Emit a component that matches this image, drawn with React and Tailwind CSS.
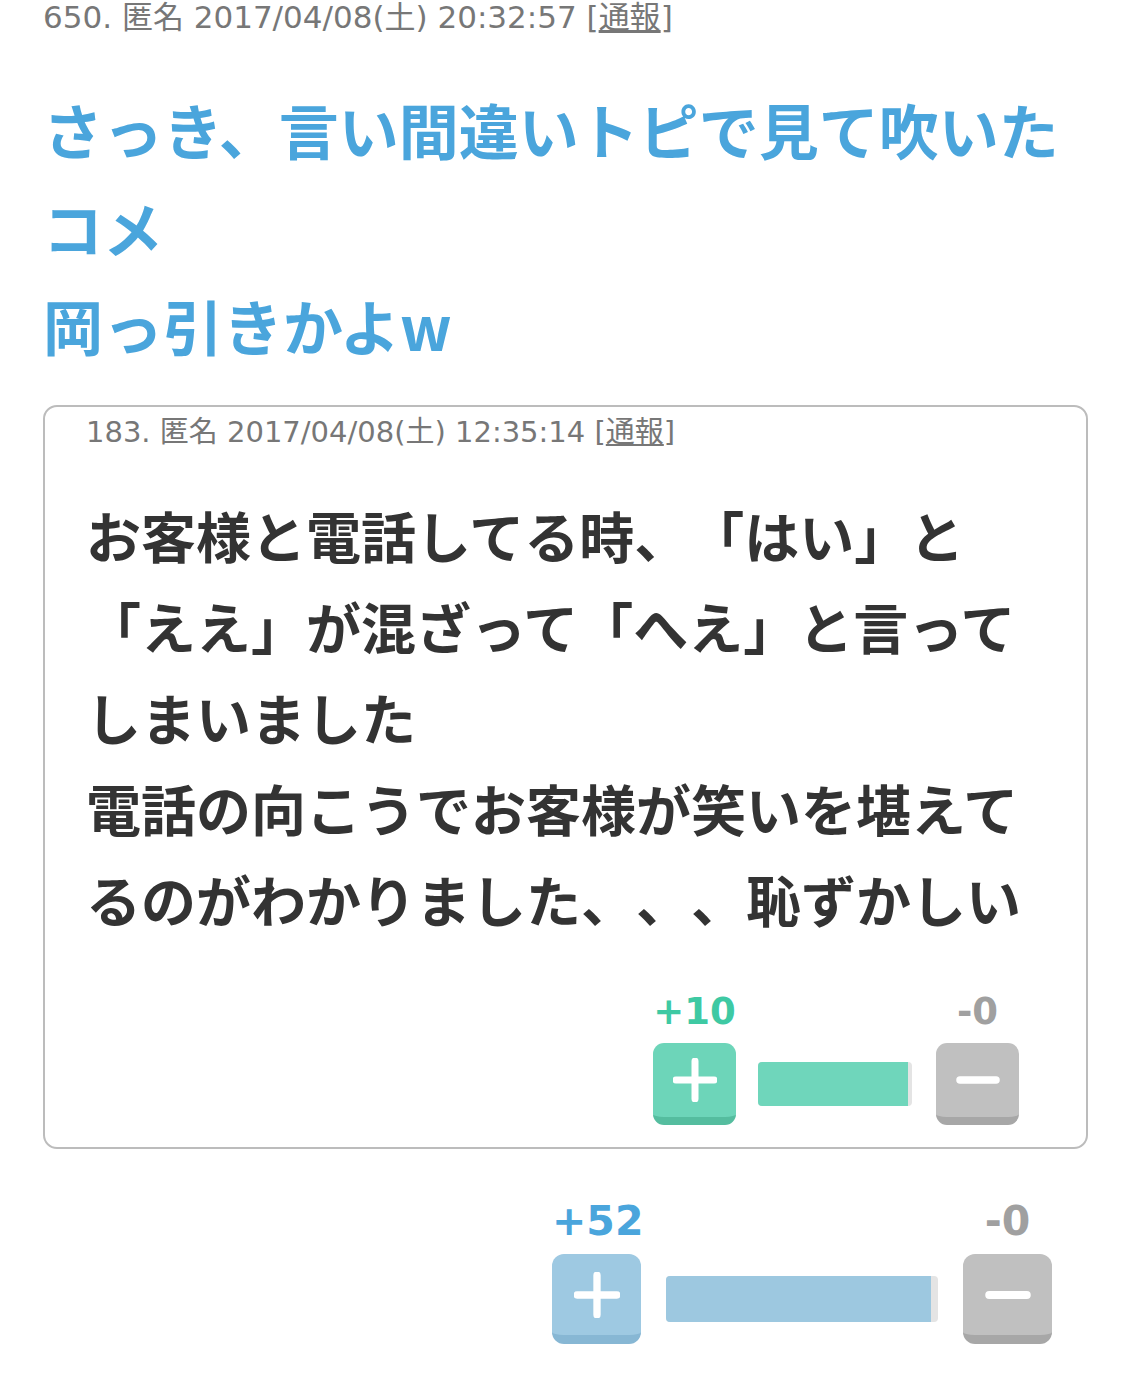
import React from "react";

const jp = { fontFamily: '"Noto Sans CJK JP", "Noto Sans", sans-serif' };
const meta = { fontFamily: '"DejaVu Sans", "Noto Sans CJK JP", sans-serif' };

function PlusIcon({ size }) {
  return (
    <svg width={size} height={size} viewBox="0 0 44 44">
      <path d="M22 3v38M3 22h38" stroke="#fff" strokeWidth="7" strokeLinecap="round" />
    </svg>
  );
}

function MinusIcon({ size }) {
  return (
    <svg width={size} height={size} viewBox="0 0 44 44">
      <path d="M4 22h36" stroke="#fff" strokeWidth="7.5" strokeLinecap="round" />
    </svg>
  );
}

function Vote({ plus, minus, big }) {
  const btn = big ? "w-[89px] h-[90px] border-b-[9px] rounded-[12px]" : "w-[83px] h-[82px] border-b-[8px] rounded-[11px]";
  const plusBtn = big ? "bg-[#9ec9e2] border-[#87b7d4]" : "bg-[#6dd5b9] border-[#55bd9f]";
  const fill = big ? "bg-[#9dc8e0]" : "bg-[#6fd6bb]";
  const num = big ? "text-[41px] leading-[44px]" : "text-[37px] leading-[40px]";
  const plusColor = big ? "text-[#4aa5dc]" : "text-[#3ec9a3]";
  return (
    <div className="flex flex-col">
      <div className={"flex justify-between font-bold " + num} style={meta}>
        <div className={"text-center " + (big ? "w-[89px] " : "w-[83px] ") + plusColor}>{plus}</div>
        <div className={"text-center text-[#a0a0a0] " + (big ? "w-[89px]" : "w-[83px]")}>{minus}</div>
      </div>
      <div className={"flex items-center " + (big ? "mt-[11px] gap-[25px]" : "mt-[11px] gap-[22px]")}>
        <div className={"flex items-center justify-center box-border " + btn + " " + plusBtn}>
          <PlusIcon size={big ? 46 : 44} />
        </div>
        <div className={"flex rounded-[4px] overflow-hidden bg-[#e4e4e4] " + (big ? "w-[272px] h-[46px]" : "w-[154px] h-[44px] mr-[2px]")}>
          <div className={"h-full " + fill} style={{ width: "97.5%" }} />
        </div>
        <div className={"flex items-center justify-center box-border bg-[#c0c0c0] border-[#a7a7a7] " + btn}>
          <MinusIcon size={big ? 46 : 44} />
        </div>
      </div>
    </div>
  );
}

export default function App() {
  return (
    <div className="w-[1125px] h-[1380px] bg-white pl-[43px] pr-[37px] overflow-hidden [text-spacing-trim:space-all]">
      <div className="text-[31px] leading-[34px] text-[#777]" style={meta}>
        650. 匿名 2017/04/08(土) 20:32:57 [<span className="underline">通報</span>]
      </div>

      <h1 className="mt-[46px] text-[60px] leading-[98px] font-bold text-[#4aa5dc]" style={jp}>
        さっき、言い間違いトピで見て吹いたコメ
        <br />
        岡っ引きかよw
      </h1>

      <div className="mt-[31px] border-2 border-[#bcbcbc] rounded-[14px] pl-[41px] pr-[41px] pt-[8px] pb-[22px]">
        <div className="text-[29px] leading-[34px] text-[#777]" style={meta}>
          183. 匿名 2017/04/08(土) 12:35:14 [<span className="underline">通報</span>]
        </div>
        <p className="mt-[40px] text-[55px] leading-[91px] font-bold text-[#333]" style={jp}>
          お客様と電話してる時、「はい」と「ええ」が混ざって「へえ」と言ってしまいました
          <br />
          電話の向こうでお客様が笑いを堪えてるのがわかりました、、、恥ずかしい
        </p>
        <div className="mt-[48px] flex justify-end pr-[26px]">
          <Vote plus="+10" minus="-0" />
        </div>
      </div>

      <div className="mt-[50px] flex justify-end pr-[36px]">
        <Vote plus="+52" minus="-0" big />
      </div>
    </div>
  );
}
